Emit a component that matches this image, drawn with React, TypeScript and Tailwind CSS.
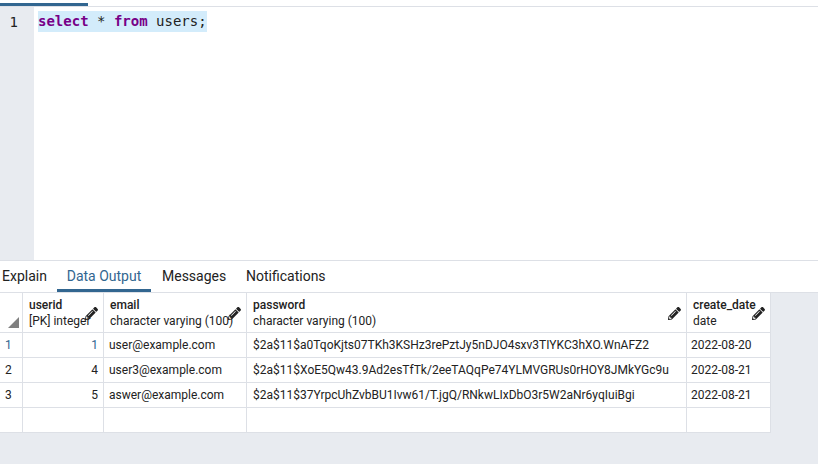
import { FaPencilAlt } from "react-icons/fa";

const cols = [
  { name: "userid", type: "[PK] integer", width: "w-[81px]" },
  { name: "email", type: "character varying (100)", width: "w-[143px]" },
  { name: "password", type: "character varying (100)", width: "w-[440px]" },
  { name: "create_date", type: "date", width: "w-[84px]" },
];

const rows = [
  ["1", "1", "user@example.com", "$2a$11$a0TqoKjts07TKh3KSHz3rePztJy5nDJO4sxv3TIYKC3hXO.WnAFZ2", "2022-08-20"],
  ["2", "4", "user3@example.com", "$2a$11$XoE5Qw43.9Ad2esTfTk/2eeTAQqPe74YLMVGRUs0rHOY8JMkYGc9u", "2022-08-21"],
  ["3", "5", "aswer@example.com", "$2a$11$37YrpcUhZvbBU1Ivw61/T.jgQ/RNkwLIxDbO3r5W2aNr6yqIuiBgi", "2022-08-21"],
  ["", "", "", "", ""],
];

const line = "border-[#dde0e6]";

export default function App() {
  return (
    <div className="flex h-[464px] w-[818px] flex-col overflow-hidden bg-[#e8ebf0] font-['Roboto',sans-serif] text-[#222222]">
      {/* query tool */}
      <div className={`h-[7px] shrink-0 border-b bg-white ${line}`}>
        <div className="mt-[3px] h-[3px] w-[88px] bg-[#326690]" />
      </div>
      <div className="flex h-[253px] shrink-0 bg-white">
        <div className="w-[34px] shrink-0 bg-[#e8ebf0] pt-[7px] pr-[16px] text-right font-['DejaVu_Sans_Mono',monospace] text-[14px] leading-[17px]">
          1
        </div>
        <div className="pl-[4px] pt-[4px] font-['DejaVu_Sans_Mono',monospace] text-[14px] leading-[21px]">
          <span className="inline-block bg-[#d3ecfb]">
            <span className="font-bold text-[#770088]">select</span>
            <span className="text-[#222222]"> * </span>
            <span className="font-bold text-[#770088]">from</span>
            <span> users;</span>
          </span>
        </div>
      </div>

      {/* tabs */}
      <div className={`flex h-[33px] shrink-0 border-t border-b bg-white text-[14px] leading-[30px] ${line}`}>
        <div className="w-[57px] pl-[2px]">Explain</div>
        <div className="h-[31px] w-[94px] border-b-[3px] border-[#326690] text-center text-[#326690]">Data Output</div>
        <div className="w-[84px] pl-[11px]">Messages</div>
        <div className="pl-[11px]">Notifications</div>
      </div>

      {/* data output */}
      <table className="w-[771px] table-fixed border-separate border-spacing-0 text-[12px]">
        <thead>
          <tr className="h-[40px] bg-white">
            <th className={`relative w-[23px] border-r border-b p-0 ${line}`}>
              <div className="absolute bottom-[4px] left-[8px] h-[11px] w-[11px] bg-[#808080] [clip-path:polygon(100%_0,100%_100%,0_100%)]" />
            </th>
            {cols.map((col) => (
              <th key={col.name} className={`relative p-0 pl-[6px] text-left align-top font-normal leading-[16px] ${col.width} border-r border-b ${line}`}>
                <div className="mt-[4px] whitespace-nowrap font-medium">{col.name}</div>
                <div className="whitespace-nowrap">{col.type}</div>
                <FaPencilAlt className="absolute right-[5px] top-[14px] text-[13px] text-[#222222]" />
              </th>
            ))}
          </tr>
        </thead>
        <tbody>
          {rows.map((row, i) => (
            <tr key={i} className="h-[25px] bg-white leading-[24px]">
              <td className={`border-r border-b p-0 pl-[5px] ${line} ${i === 0 ? "text-[#326690]" : ""}`}>{row[0]}</td>
              <td className={`border-r border-b p-0 pr-[5px] text-right ${line} ${i === 0 ? "text-[#326690]" : ""}`}>{row[1]}</td>
              <td className={`border-r border-b p-0 pl-[5px] whitespace-nowrap ${line}`}>{row[2]}</td>
              <td className={`border-r border-b p-0 pl-[6px] whitespace-nowrap ${line}`}>{row[3]}</td>
              <td className={`border-r border-b p-0 pl-[4px] ${line}`}>{row[4]}</td>
            </tr>
          ))}
        </tbody>
      </table>
    </div>
  );
}
